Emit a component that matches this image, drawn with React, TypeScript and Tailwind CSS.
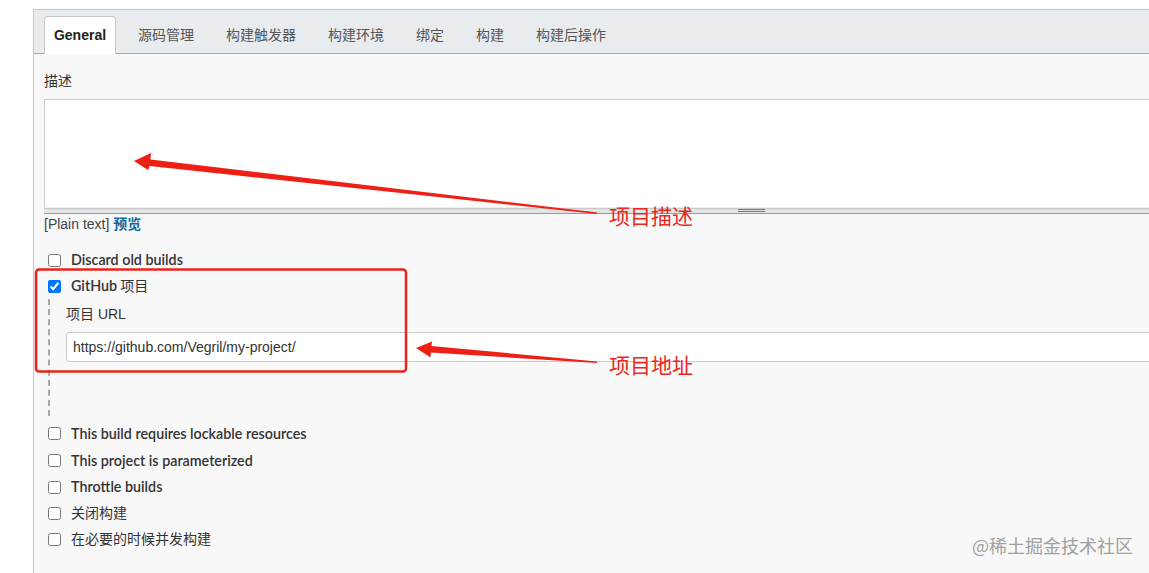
import React from "react";

const FONT = "font-['Liberation_Sans','Noto_Sans_CJK_SC',sans-serif]";
const LABEL = "font-['Lato','Liberation_Sans','Noto_Sans_CJK_SC',sans-serif]";

function Row({ label, extra, checked = false, h = "h-[26px]" }: { label: string; extra?: string; checked?: boolean; h?: string }) {
  return (
    <label className={`flex items-center ${h}`}>
      <input
        type="checkbox"
        defaultChecked={checked}
        className="m-0 ml-[4px] w-[13px] h-[13px] accent-[#0075ff]"
      />
      <span className={`ml-[10px] text-[14.3px] text-[#333] font-semibold ${LABEL}`}>
        {label}
        {extra ? <span className="font-normal font-['Noto_Sans_CJK_SC',sans-serif] text-[14px]"> {extra}</span> : null}
      </span>
    </label>
  );
}

function Row2({ label, bold = true, h = "h-[27px]" }: { label: string; bold?: boolean; h?: string }) {
  return (
    <label className={`flex items-center ${h}`}>
      <input type="checkbox" className="m-0 ml-[4px] w-[13px] h-[13px] accent-[#0075ff]" />
      <span className={`ml-[10px] text-[#333] ${bold ? `text-[14.3px] font-semibold ${LABEL}` : "text-[14px] font-normal"}`}>{label}</span>
    </label>
  );
}

export default function App() {
  const tabs = ["源码管理", "构建触发器", "构建环境", "绑定", "构建", "构建后操作"];
  return (
    <div className={`relative w-[1149px] h-[573px] overflow-hidden bg-white ${FONT}`}>
      <div className="ml-[33px] mt-[9px] w-[1200px] h-[600px] border-l border-t border-[#c9c9c9] bg-[#f8f8f8]">
        {/* Tab bar */}
        <div className="h-[44px] bg-[#e9ecef] border-b border-[#a5a9ad] flex items-end pl-[10px]">
          <div className="-mb-px h-[38px] w-[72px] bg-white border border-b-0 border-[#c6c9cc] rounded-t-[4px] flex items-center justify-center text-[14px] font-bold text-[#222]">
            General
          </div>
          <div className="ml-[6px] flex">
            {tabs.map((t) => (
              <div key={t} className="h-[38px] -mb-px px-[16px] flex items-center text-[14px] text-[#555]">
                {t}
              </div>
            ))}
          </div>
        </div>

        {/* Content */}
        <div className="pl-[10px] pt-[17px]">
          <div className="text-[14px] leading-5 text-[#333]">描述</div>
          <div className="mt-[8px] h-[109px] bg-white border border-[#cfcfcf] border-b-[#eee]" />
          <div className="relative h-[6px] bg-[#e2e4e6] border-t border-[#c8c8c8] border-b border-b-[#9a9a9a] flex justify-start">
            <div className="ml-[694px] mt-[0px] w-[27px] flex flex-col gap-[1px]">
              <div className="h-[1px] bg-[#777]" />
              <div className="h-[1px] bg-[#777]" />
            </div>
          </div>
          <div className="text-[14px] leading-5 text-[#444]">
            [Plain text] <span className="font-bold text-[#0b69a3]">预览</span>
          </div>

          <div className="mt-[13px] flex flex-col">
            <Row label="Discard old builds" />
            <Row label="GitHub" extra="项目" checked />
            <div className="ml-[4px] border-l-2 border-dashed border-[#a8a8a8] pl-[16px] pt-[3px] pb-[54px]">
              <div className="h-[24px] flex items-center text-[14px] text-[#333]">项目 URL</div>
              <div className="mt-[6px] h-[30px] bg-white border border-[#cacaca] rounded-[3px] flex items-center pl-[6px] text-[14px] text-[#333]">
                https://github.com/Vegril/my-project/
              </div>
            </div>
            <div className="mt-[4px] flex flex-col">
              <Row2 label="This build requires lockable resources" />
              <Row2 label="This project is parameterized" />
              <Row2 label="Throttle builds" h="h-[26px]" />
              <Row2 label="关闭构建" bold={false} h="h-[26px]" />
              <Row2 label="在必要的时候并发构建" bold={false} />
            </div>
          </div>
        </div>
      </div>

      {/* Annotations */}
      <svg className="absolute left-0 top-0 pointer-events-none" width="1149" height="573" viewBox="0 0 1149 573">
        <rect x="36" y="269.5" width="370" height="102" rx="3" fill="none" stroke="#e8241c" strokeWidth="2.5" />
        <polygon
          fill="#ee1f14"
          points="134,161 151,153 150.4,159.6 597.2,212.5 596.8,214 149.6,166 148,170"
        />
        <polygon
          fill="#ee1f14"
          points="416,348 432,341.5 431.4,346 597,361.5 596.9,363 430.9,352.5 430.5,357.5"
        />
      </svg>
      <div className="absolute left-[609px] top-[200px] text-[21px] leading-[30px] text-[#e8291d] font-['Noto_Sans_CJK_SC',sans-serif]">
        项目描述
      </div>
      <div className="absolute left-[609px] top-[349px] text-[21px] leading-[30px] text-[#e8291d] font-['Noto_Sans_CJK_SC',sans-serif]">
        项目地址
      </div>
      <div className="absolute left-[972px] top-[532px] text-[18px] leading-[26px] text-[#a0a0a0] font-['Noto_Sans_CJK_SC',sans-serif]">
        @稀土掘金技术社区
      </div>
    </div>
  );
}
